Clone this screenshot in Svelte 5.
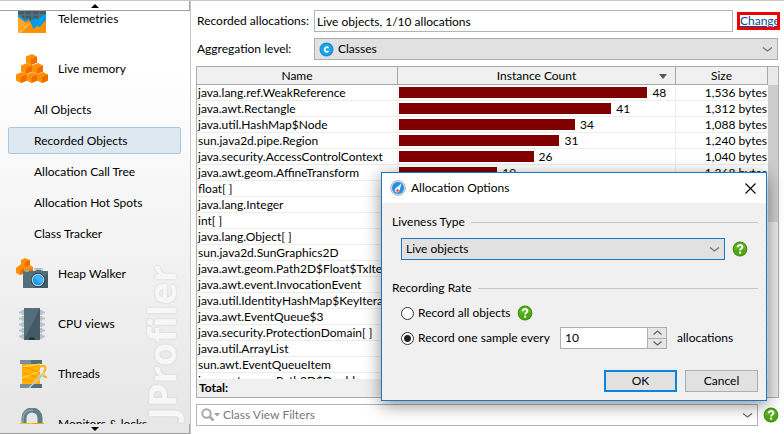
<script>
  const subItems = ['All Objects', 'Recorded Objects', 'Allocation Call Tree', 'Allocation Hot Spots', 'Class Tracker'];
  const lower = [
    { icon: 'heap', label: 'Heap Walker' },
    { icon: 'cpu', label: 'CPU views' },
    { icon: 'threads', label: 'Threads' },
    { icon: 'lock', label: 'Monitors & locks' }
  ];
  const rows = [
    { name: 'java.lang.ref.WeakReference', count: 48, size: '1,536 bytes' },
    { name: 'java.awt.Rectangle', count: 41, size: '1,312 bytes' },
    { name: 'java.util.HashMap$Node', count: 34, size: '1,088 bytes' },
    { name: 'sun.java2d.pipe.Region', count: 31, size: '1,240 bytes' },
    { name: 'java.security.AccessControlContext', count: 26, size: '1,040 bytes' },
    { name: 'java.awt.geom.AffineTransform', count: 19, size: '1,368 bytes' },
    { name: 'float[ ]' },
    { name: 'java.lang.Integer' },
    { name: 'int[ ]' },
    { name: 'java.lang.Object[ ]' },
    { name: 'sun.java2d.SunGraphics2D' },
    { name: 'java.awt.geom.Path2D$Float$TxIterator' },
    { name: 'java.awt.event.InvocationEvent' },
    { name: 'java.util.IdentityHashMap$KeyIterator' },
    { name: 'java.awt.EventQueue$3' },
    { name: 'java.security.ProtectionDomain[ ]' },
    { name: 'java.util.ArrayList' },
    { name: 'sun.awt.EventQueueItem' },
    { name: 'java.awt.geom.Path2D$Double' }
  ];
  const maxCount = 48;
  let rate = $state('every');
  let selected = $state('Recorded Objects');
</script>

{#snippet chevron()}
  <svg class="chevron" width="11" height="7" viewBox="0 0 11 7" aria-hidden="true"><path d="M1 1.5 5.5 5 10 1.5" fill="none" stroke="#707070" stroke-width="1.3" /></svg>
{/snippet}

{#snippet help()}
  <button class="help" type="button" aria-label="Help">
    <svg width="16" height="16" viewBox="0 0 16 16">
      <circle cx="8" cy="8" r="7.4" fill="#419012" />
      <circle cx="8" cy="8" r="6.5" fill="#50a516" />
      <path d="M2.2 8.5a5.8 5.8 0 0 1 11.6-.9C10 7 6 9 2.2 8.5z" fill="#62b52a" />
      <path d="M5.7 6.2C5.7 3.4 10.4 3.4 10.4 6c0 1.8-2.3 1.7-2.3 3.5" fill="none" stroke="#fff" stroke-width="1.9" />
      <rect x="7.1" y="10.6" width="2" height="2" fill="#fff" />
    </svg>
  </button>
{/snippet}

{#snippet cube(x, y)}
  <path d="M{x} {y + 2.5}l6-2.5 5 2.5v6l-6 2.5-5-2.5z" fill="#ff9100" />
  <path d="M{x + 5} {y + 5}l6-2.5v6l-6 2.5z" fill="#ef6c00" />
{/snippet}

{#snippet icon(kind)}
  <svg class="icon" width="32" height="32" viewBox="0 0 32 32" aria-hidden="true">
    {#if kind === 'telemetry'}
      <rect x="2" y="2" width="28" height="28" fill="#455a64" />
      <path d="M2 7h28M2 12h28M9 2v18M16 2v18M23 2v18" stroke="#607d8b" />
      <path d="M2 11l4 3 3 3 3-2 3 3 4-3 3 1 4-4 4-1v19H2z" fill="#039be5" />
      <path d="M2 14l4 3 4 2 3-2 3 5 1 4 4-3 3 1 6-7v13H2z" fill="#ff9100" />
      <path d="M2 30V14l4 3 4 4z" fill="#ffa726" />
      <path d="M2 30l10-10 2 1-9 9z" fill="#ffb74d" />
    {:else if kind === 'memory'}
      {@render cube(10, 1)}
      {@render cube(5, 10)}
      {@render cube(16, 10)}
      {@render cube(0, 19)}
      {@render cube(10.5, 19)}
      {@render cube(21, 19)}
    {:else if kind === 'heap'}
      <path d="M5 2l4-2 5 2v5l3 2v5l-5 3-4-2-4 2-4-2v-5l4-3 1-1z" fill="#ff8f00" />
      <path d="M9 4l5-2v5l-5 2zM4 12l4-2v5l-4 2zM13 12l4-2v4l-4 2z" fill="#ef6c00" />
      <path d="M7 13h11l1-3h7l1 3h5v17H7z" fill="#546e7a" />
      <path d="M7 30h25V15L17 30z" fill="#455a64" />
      <path d="M19 13v-2h7v2" fill="none" stroke="#cfd8dc" stroke-width="1.500" />
      <path d="M9 12h4v2H9z" fill="#90a4ae" />
      <circle cx="22" cy="22" r="7" fill="#263238" />
      <circle cx="22" cy="22" r="6.3" fill="#b0d4e8" />
      <circle cx="22" cy="22" r="5.2" fill="#1e9cf0" />
      <path d="M18 19l7 7a5 5 0 0 0 1-7 5 5 0 0 0-8 0z" fill="#40b4fa" />
    {:else if kind === 'cpu'}
      {#each [2, 8, 14, 20, 26] as y}
        <path d="M8 {y}H6L5 {y + 1.5}H3v2h2l1 1.500h2zM24 {y}h2l1 1.500h2v2h-2l-1 1.500h-2z" fill="#b7c3ca" />
      {/each}
      <rect x="8" y="0" width="16" height="32" fill="#546e7a" />
      <path d="M24 0v32H8z" fill="#455a64" />
      <path d="M13 32a3 3 0 0 1 6 0z" fill="#263238" />
    {:else if kind === 'threads'}
      <path d="M4 2h22v4H4z" fill="#78909c" />
      <path d="M15 2h11v4H15z" fill="#546e7a" />
      <path d="M6 6h18v20H6z" fill="#ffb300" />
      <path d="M6 9l18-3M6 20l18-7" stroke="#ffe082" />
      <path d="M6 9c7 1 12 3 18 6M6 15c7 1 12 3 18 6M6 21c5 1 9 2 14 5" fill="none" stroke="#ff8f00" />
      <path d="M4 26h22v4H4z" fill="#78909c" />
      <path d="M15 26h11v4H15z" fill="#546e7a" />
      <path d="M24 9c5-3 7 1 4 5-2 4 0 5 3 5" fill="none" stroke="#ffb300" stroke-width="2" />
      <path d="M12 31l12-14 4-3-2 5z" fill="#b0bec5" stroke="#eceff1" stroke-width=".5" />
    {:else}
      <path d="M8 18v-8a8 8 0 0 1 16 0v8" fill="none" stroke="#607d8b" stroke-width="5" />
      <path d="M7 18v-8a9 8 0 0 1 10-8" fill="none" stroke="#90a4ae" stroke-width="1.500" />
      <path d="M4 15h24v16H4z" fill="#ffc107" />
      <path d="M16 15h12v16H16z" fill="#ffa000" />
    {/if}
  </svg>
{/snippet}

<div class="app">
  <nav class="sidebar">
    <button class="scroll" type="button" aria-label="Scroll up"><svg width="8" height="4" viewBox="0 0 8 4"><path d="M4 0l4 4H0z" /></svg></button>
    <div class="items">
      <span class="brand" aria-hidden="true">JProfiler</span>
      <div class="list">
        <a class="item" href="#telemetries">{@render icon('telemetry')}Telemetries</a>
        <a class="item" href="#memory">{@render icon('memory')}Live memory</a>
        {#each subItems as s}
          <a class="sub" class:active={s === selected} href="#view" onclick={() => (selected = s)}>{s}</a>
        {/each}
        {#each lower as l}
          <a class="item" href="#view">{@render icon(l.icon)}{l.label}</a>
        {/each}
      </div>
    </div>
    <button class="scroll" type="button" aria-label="Scroll down"><svg width="8" height="4" viewBox="0 0 8 4"><path d="M4 4l4-4H0z" /></svg></button>
  </nav>

  <main>
    <div class="field">
      <label for="recorded">Recorded allocations:</label>
      <input id="recorded" class="box" readonly value="Live objects, 1/10 allocations" />
      <a class="change" href="#change">Change</a>
    </div>
    <div class="field">
      <label for="level">Aggregation level:</label>
      <div class="combo level">
        <svg class="classIcon" width="15" height="15" viewBox="0 0 15 15" aria-hidden="true"><circle cx="7.5" cy="7.5" r="7" fill="#0e93dc" /><circle cx="7.5" cy="7.5" r="5.5" fill="#1ca5ec" /><path d="M9.7 6A2.3 2.3 0 1 0 9.7 9" fill="none" stroke="#fff" stroke-width="1.7" /></svg>
        <select id="level"><option>Classes</option></select>
        {@render chevron()}
      </div>
    </div>

    <div class="grid">
      <div class="data">
        <div class="clip">
          <table>
            <colgroup><col class="cName" /><col /><col class="cSize" /></colgroup>
            <thead>
              <tr>
                <th><span>Name</span></th>
                <th><span>Instance Count</span><svg class="sort" width="8" height="5" viewBox="0 0 8 5" aria-hidden="true"><path d="M0 0h8L4 5z" fill="#555" /></svg></th>
                <th><span>Size</span></th>
              </tr>
            </thead>
            <tbody>
              {#each rows as r}
                <tr>
                  <td>{r.name}</td>
                  <td>
                    {#if r.count}
                      <div class="count"><div class="bar" style="width: {(r.count / maxCount) * 90}%"></div>{r.count}</div>
                    {/if}
                  </td>
                  <td class="size">{r.size ?? ''}</td>
                </tr>
              {/each}
            </tbody>
          </table>
        </div>
        <div class="total">Total:</div>
      </div>
      <div class="track"><div class="thumb"></div></div>
    </div>

    <div class="filters">
      <div class="search">
        <svg width="19" height="14" viewBox="0 0 19 14" aria-hidden="true"><circle cx="5.5" cy="5.5" r="4.2" fill="none" stroke="#a8a8a8" stroke-width="2" /><path d="M8.5 8.5l4 4" stroke="#a8a8a8" stroke-width="2.5" /><path d="M13 5h6l-3 3.500z" fill="#a0a0a0" /></svg>
        <input aria-label="Class View Filters" placeholder="Class View Filters" />
        {@render chevron()}
      </div>
      {@render help()}
    </div>
  </main>

  <div class="dialog" role="dialog" aria-labelledby="title">
    <header>
      <svg width="16" height="16" viewBox="0 0 16 16" aria-hidden="true"><circle cx="8" cy="8" r="7.5" fill="#d5d5d5" stroke="#aaa" stroke-width=".7" /><circle cx="8" cy="8" r="6" fill="#1e90f0" /><path d="M11.5 3.5L6 8a2.4 2.4 0 1 0 3.5 2.5z" fill="#fff" /><circle cx="7.5" cy="10.5" r="1.3" fill="#e53935" /></svg>
      <span id="title">Allocation Options</span>
      <button class="close" type="button" aria-label="Close"><svg width="11" height="11" viewBox="0 0 11 11"><path d="M.5.5l10 10M10.5.5l-10 10" stroke="#000" stroke-width="1.1" /></svg></button>
    </header>
    <div class="body">
      <h2>Liveness Type</h2>
      <div class="line liveness">
        <div class="combo focus">
          <select aria-label="Liveness Type"><option>Live objects</option></select>
          {@render chevron()}
        </div>
        {@render help()}
      </div>
      <h2>Recording Rate</h2>
      <div class="line option">
        <label><input type="radio" value="all" bind:group={rate} />Record all objects</label>
        {@render help()}
      </div>
      <div class="line sample">
        <label class="every"><input type="radio" value="every" bind:group={rate} />Record one sample every</label>
        <div class="spinner">
          <input id="every" aria-label="Sample interval" value="10" />
          <div class="steps">
            <button type="button" aria-label="Increase"><svg width="9" height="5" viewBox="0 0 9 5"><path d="M.5 4.5l4-3.5 4 3.5" fill="none" stroke="#606060" stroke-width="1.2" /></svg></button>
            <button type="button" aria-label="Decrease"><svg width="9" height="5" viewBox="0 0 9 5"><path d="M.5.5l4 3.5 4-3.5" fill="none" stroke="#606060" stroke-width="1.2" /></svg></button>
          </div>
        </div>
        <label for="every">allocations</label>
      </div>
      <div class="actions">
        <button class="btn primary" type="button">OK</button>
        <button class="btn" type="button">Cancel</button>
      </div>
    </div>
  </div>
</div>

<style>
  :global(body) { background: #fff; }
  .app, .app * { box-sizing: border-box; }
  .app {
    position: relative;
    display: flex;
    height: 100vh;
    overflow: hidden;
    border-top: 1px solid #c8c8c8;
    font: 12px/16px Lato, 'Open Sans', sans-serif;
    color: #000;
  }
  input, select, button { font: inherit; color: inherit; margin: 0; }
  button { padding: 0; }
  a { color: inherit; text-decoration: none; }

  .sidebar { width: 191px; flex: none; display: flex; flex-direction: column; border-right: 1px solid #c8c8c8; background: linear-gradient(#fff 15%, #e6e6e6); }
  .scroll { flex: none; height: 10px; display: flex; align-items: center; justify-content: center; background: transparent; border: 0 solid #a0a0a0; border-width: 0 1px 1px 0; }
  .items { position: relative; flex: 1; min-height: 0; overflow: hidden; }
  .list { position: relative; display: flex; flex-direction: column; margin-top: -17px; }
  .item { height: 50px; display: flex; align-items: center; gap: 10px; padding-left: 16px; white-space: nowrap; }
  .sub { height: 27px; margin: 2px 9px 2px 8px; padding-left: 25px; line-height: 25px; border: 1px solid transparent; border-radius: 2px; }
  .active { background: #dde8f1; border-color: #a5c7e2; }
  .icon { flex: none; }
  .brand { position: absolute; right: 7px; bottom: 4px; writing-mode: vertical-rl; transform: rotate(180deg); font: bold 38px/44px 'Open Sans', sans-serif; color: #f7f7f7; text-shadow: 0 0 2px #c8c8c8; }

  main { flex: 1; min-width: 0; display: flex; flex-direction: column; padding: 9px 5px 8px 5px; }
  .field { display: flex; align-items: center; height: 22px; margin-bottom: 6px; padding-right: 1px; }
  .field label { width: 118px; flex: none; padding-left: 1px; white-space: nowrap; }
  .box { flex: 1; min-width: 0; height: 22px; border: 1px solid #b4b4b4; padding: 0 2px; background: #fff; }
  .change { width: 43px; height: 18px; margin: 0 -2px 0 4px; border: 3px solid #f00000; overflow: hidden; line-height: 12px; color: #0a4a94; text-decoration: underline; }
  .combo { flex: 1; min-width: 0; height: 22px; display: flex; align-items: center; background: #e1e1e1; border: 1px solid #adadad; padding: 0 4px; }
  .combo select { flex: 1; min-width: 0; height: 20px; appearance: none; border: 0; background: transparent; padding: 0; }
  .classIcon { margin-right: 4px; }
  .chevron { flex: none; }

  .grid { flex: 1; min-height: 0; display: flex; border: 1px solid #adadad; }
  .data { flex: 1; min-width: 0; display: flex; flex-direction: column; }
  .clip { flex: 1; min-height: 0; overflow: hidden; }
  table { width: 100%; table-layout: fixed; border-collapse: separate; border-spacing: 0; }
  .cName { width: 201px; }
  .cSize { width: 92px; }
  th { height: 18px; padding: 0; font-weight: normal; background: #f0f0f0; border-bottom: 1px solid #a8a8a8; line-height: 17px; position: relative; }
  th span { display: block; padding-top: 1px; border-right: 1px solid #a8a8a8; line-height: 16px; }
  .sort { position: absolute; right: 9px; top: 7px; }
  td { height: 16px; padding: 0 0 0 1px; line-height: 15px; border-right: 1px solid #ededed; border-bottom: 1px solid #ededed; white-space: nowrap; overflow: hidden; }
  td.size { text-align: right; padding-right: 1px; border-right: 0; }
  .count { display: flex; align-items: center; gap: 5px; }
  .bar { height: 11px; background: #800000; }
  .total { flex: none; height: 18px; background: #f0f0f0; font-weight: bold; padding-left: 2px; line-height: 18px; }
  .track { width: 10px; flex: none; background: #e9e9e9; padding-top: 18px; }
  .thumb { height: 44%; background: #cdcdcd; }

  .filters { display: flex; align-items: center; gap: 5px; margin-top: 6px; }
  .search { flex: 1; min-width: 0; height: 22px; display: flex; align-items: center; gap: 3px; border: 1px solid #b4b4b4; padding: 0 4px; }
  .search input { flex: 1; min-width: 0; border: 0; padding: 0; background: transparent; }
  .search input::placeholder { color: #777; opacity: 1; }
  .help { flex: none; width: 16px; height: 16px; border: 0; background: transparent; display: flex; }

  .dialog { position: absolute; top: 171px; right: 17px; width: 386px; background: #f0f0f0; border: 1px solid #1879cc; box-shadow: 0 4px 16px rgba(0, 0, 0, 0.45); }
  header { display: flex; align-items: center; gap: 5px; height: 30px; padding: 0 10px 0 8px; background: #fff; }
  .close { margin-left: auto; border: 0; background: transparent; display: flex; }
  .body { padding: 11px 8px 8px 10px; }
  h2 { display: flex; align-items: center; gap: 6px; margin: 0; font: inherit; }
  h2::after { content: ''; flex: 1; height: 1px; background: #c6c6c6; }
  .line { display: flex; align-items: center; padding-left: 9px; white-space: nowrap; }
  .line label { display: flex; align-items: center; }
  .liveness { gap: 7px; margin: 8px 10px 20px 0; }
  .focus { border-color: #1879cc; }
  .option { height: 22px; margin-top: 6px; gap: 6px; }
  .sample { margin-top: 3px; gap: 10px; }
  .every { min-width: 149px; }
  input[type='radio'] { appearance: none; width: 13px; height: 13px; margin-right: 4px; border: 1px solid #333; border-radius: 50%; background: #fff; }
  input[type='radio']:checked { background: radial-gradient(circle, #222 0 3px, #fff 4px); }
  .spinner { display: flex; width: 107px; height: 22px; border: 1px solid #adadad; background: #fff; }
  .spinner input { flex: 1; min-width: 0; border: 0; padding: 0 4px; background: transparent; }
  .steps { width: 19px; display: flex; flex-direction: column; border-left: 1px solid #adadad; }
  .steps button { flex: 1; min-height: 0; border: 0; background: #e6e6e6; display: flex; align-items: center; justify-content: center; }
  .steps button + button { border-top: 1px solid #adadad; }
  .actions { display: flex; justify-content: flex-end; gap: 8px; margin-top: 21px; }
  .btn { width: 73px; height: 22px; border: 1px solid #adadad; background: #e1e1e1; }
  .primary { border: 2px solid #0a84e0; }
</style>
